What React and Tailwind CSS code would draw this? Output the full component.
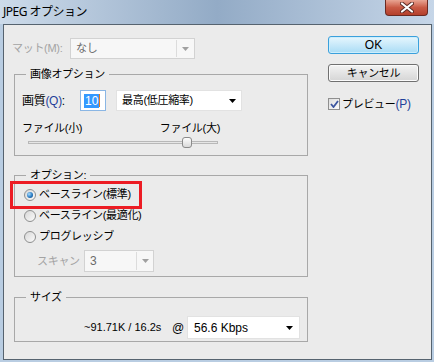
import React from 'react'

const Arrow = ({ color = '#000' }) => (
    <svg width="7" height="4" viewBox="0 0 7 4"><path d="M0 0h7L3.5 4z" fill={color} /></svg>
)

const Radio = ({ checked, label }) => (
    <div className="flex items-center h-[21px] gap-[3px] ml-[2px]">
        <span className="w-[12px] h-[12px] rounded-full border border-[#8e8f8f] bg-gradient-to-br from-[#d8d8d8] to-[#fbfbfb] flex items-center justify-center">
            {checked && <span className="w-[6px] h-[6px] rounded-full bg-[radial-gradient(circle_at_35%_35%,#a8dcff,#2a7cc4_55%,#0c3d72)]" />}
        </span>
        <span>{label}</span>
    </div>
)

const App = () => {
    return (
        <div className="w-[434px] h-[362px] bg-[#b9cde2] font-['Liberation_Sans','Noto_Sans_CJK_JP',sans-serif] text-[11px] tracking-[-0.3px] text-black overflow-hidden">
            {/* Title bar */}
            <div className="h-[24px] flex items-start justify-between bg-gradient-to-r from-[#cddbea] via-[#93abc6] to-[#c6d6e8]">
                <div className="h-[24px] flex items-center pl-[3px] text-[12px] tracking-[-0.5px] font-['Noto_Sans','Noto_Sans_CJK_JP',sans-serif]">JPEG オプション</div>
                <div className="mr-[6px] w-[43px] h-[16px] rounded-b-[4px] border border-t-0 border-[#6b2a22] bg-gradient-to-b from-[#e8a493] via-[#c95a45] to-[#b4402c] flex items-center justify-center">
                    <svg width="14" height="11" viewBox="0 0 14 11">
                        <path d="M2 1.5L12 9.5M12 1.5L2 9.5" stroke="#5a2a24" strokeWidth="4" strokeLinecap="round" />
                        <path d="M2 1.5L12 9.5M12 1.5L2 9.5" stroke="#fff" strokeWidth="2.2" strokeLinecap="round" />
                    </svg>
                </div>
            </div>

            {/* Client area */}
            <div className="ml-[3px] w-[429px] h-[336px] border border-[#56636f] bg-[#ebebeb] flex pl-[8px] pt-[11px]">
                {/* Left column */}
                <div className="w-[296px] pt-[2px]">
                    {/* Matte */}
                    <div className="flex items-center h-[21px]">
                        <span className="w-[58px] text-[#a3a3a3]">マット(M):</span>
                        <div className="w-[125px] h-[21px] border border-[#d2d2d2] bg-[#f7f7f7] flex items-center">
                            <span className="flex-1 pl-[5px] text-[#6b6b6b]">なし</span>
                            <span className="w-[18px] h-[17px] border-l border-[#dcdcdc] flex items-center justify-center"><Arrow color="#a0a0a0" /></span>
                        </div>
                    </div>

                    {/* 画像オプション */}
                    <fieldset className="mt-[8px] ml-[2px] w-[294px] border border-[#a8a8a8] pl-[7px] pb-[6px]">
                        <legend className="ml-[4px] px-[4px] leading-[14px]">画像オプション</legend>
                        <div className="mt-[9px] flex items-center h-[21px]">
                            <span className="w-[58px] text-[12px]">画質<span className="text-[#1f3f9a]">(Q)</span>:</span>
                            <div className="w-[26px] h-[21px] border border-[#8ab6e4] bg-white flex items-center pl-[3px]">
                                <span className="bg-[#3399ff] text-white text-[12px] leading-[14px] tracking-normal px-[1px]">10</span>
                                <span className="w-[1px] h-[13px] bg-[#e07a1f]" />
                            </div>
                            <div className="ml-[10px] w-[126px] h-[21px] border border-[#e2e2e2] bg-white flex items-center justify-between pl-[5px] pr-[5px]">
                                <span>最高(低圧縮率)</span>
                                <Arrow />
                            </div>
                        </div>
                        <div className="mt-[10px] h-[14px] w-[198px] flex justify-between leading-[14px]">
                            <span>ファイル(小)</span>
                            <span>ファイル(大)</span>
                        </div>
                        <div className="relative h-[14px] w-[190px] ml-[6px] flex items-center">
                            <div className="w-full h-[3px] border border-[#b8b8b8] bg-[#e6e6e6]" />
                            <div className="absolute left-[154px] top-[2px] w-[10px] h-[11px] rounded-[3px] border border-[#8a8a8a] bg-gradient-to-b from-[#fdfdfd] to-[#d9d9d9]" />
                        </div>
                    </fieldset>

                    {/* オプション */}
                    <fieldset className="mt-[12px] ml-[2px] w-[294px] border border-[#a8a8a8] pl-[7px] pb-[4px]">
                        <legend className="ml-[4px] px-[4px] leading-[14px]">オプション:</legend>
                        <div className="pt-[2px]">
                            <div className="relative">
                                <Radio checked label="ベースライン(標準)" />
                                <div className="absolute left-[-12px] top-[-3px] w-[132px] h-[28px] border-[3px] border-[#ec1c24]" />
                            </div>
                            <Radio label="ベースライン(最適化)" />
                            <Radio label="プログレッシブ" />
                        </div>
                        <div className="mt-[3px] flex items-center h-[22px] pl-[15px]">
                            <span className="w-[47px] text-[#a3a3a3]">スキャン</span>
                            <div className="w-[70px] h-[22px] border border-[#d2d2d2] bg-[#f7f7f7] flex items-center">
                                <span className="flex-1 pl-[5px] text-[#6b6b6b] text-[12px]">3</span>
                                <span className="w-[17px] h-[18px] border-l border-[#dcdcdc] flex items-center justify-center"><Arrow color="#a0a0a0" /></span>
                            </div>
                        </div>
                    </fieldset>

                    {/* サイズ */}
                    <fieldset className="mt-[13px] ml-[2px] w-[294px] border border-[#a8a8a8] pl-[7px] pb-[2px]">
                        <legend className="ml-[4px] px-[4px] leading-[14px]">サイズ</legend>
                        <div className="mt-[12px] flex items-center h-[23px] tracking-normal">
                            <span className="ml-[62px] w-[88px] text-[11px]">~91.71K / 16.2s</span>
                            <span className="w-[15px] text-[12px]">@</span>
                            <div className="w-[113px] h-[23px] border border-[#e2e2e2] bg-white flex items-center justify-between pl-[6px] pr-[6px]">
                                <span className="text-[12px]">56.6 Kbps</span>
                                <Arrow />
                            </div>
                        </div>
                    </fieldset>
                </div>

                {/* Right column */}
                <div className="ml-[20px] w-[91px] flex flex-col">
                    <button className="h-[18px] rounded-[3px] border border-[#3aa0dc] bg-gradient-to-b from-[#e6f6fd] to-[#a9dcf5] shadow-[inset_0_0_0_1px_#cdeefc] text-[12px] leading-none tracking-normal">OK</button>
                    <button className="mt-[10px] h-[18px] rounded-[3px] border border-[#707070] bg-gradient-to-b from-[#f3f3f3] to-[#d5d5d5] shadow-[inset_0_0_0_1px_#fbfbfb] text-[11px] leading-none">キャンセル</button>
                    <div className="mt-[16px] flex items-center gap-[2px] h-[12px]">
                        <span className="w-[12px] h-[12px] border border-[#8f8f8f] bg-gradient-to-br from-[#dedede] to-[#fbfbfb] flex items-center justify-center">
                            <svg width="9" height="8" viewBox="0 0 9 8"><path d="M1 4l2.5 3L8 1" stroke="#3c56a0" strokeWidth="1.8" fill="none" /></svg>
                        </span>
                        <span>プレビュー<span className="text-[#1f3f9a] text-[12px]">(P)</span></span>
                    </div>
                </div>
            </div>
        </div>
    )
}

export default App
